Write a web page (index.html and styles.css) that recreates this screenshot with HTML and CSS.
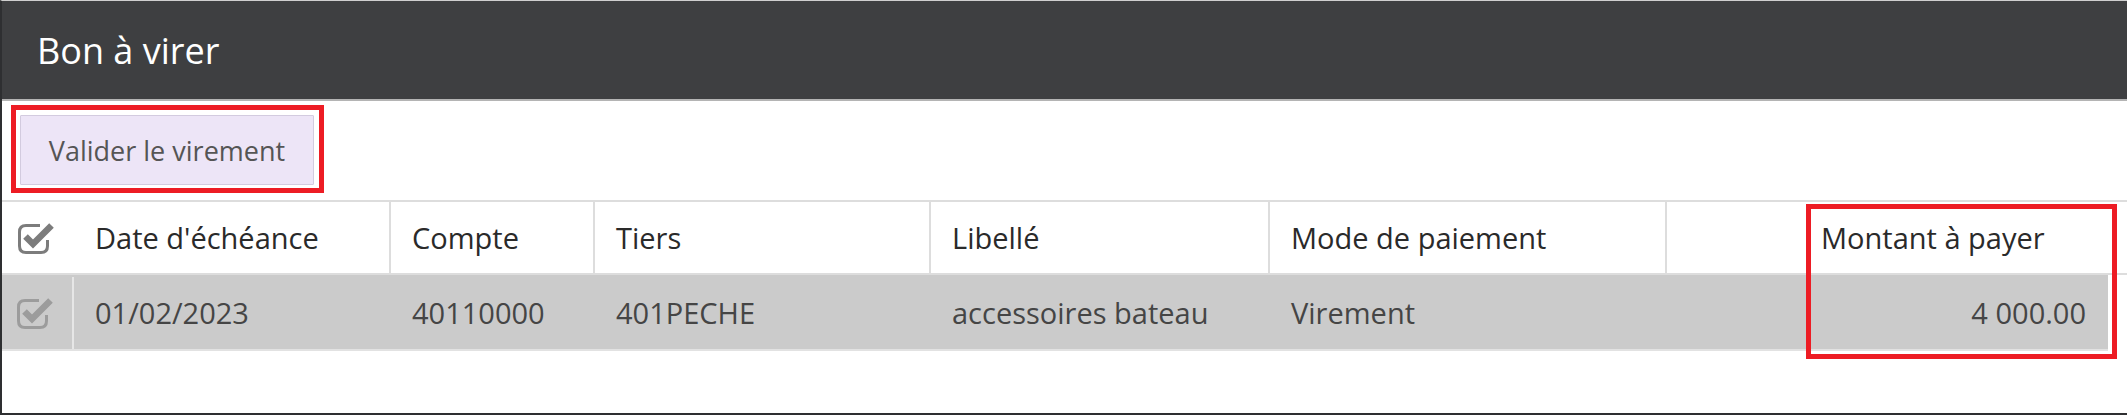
FILE: index.html
```html
<!DOCTYPE html>
<html lang="fr">
<head>
<meta charset="utf-8">
<title>Bon à virer</title>
<link rel="stylesheet" href="styles.css">
</head>
<body>
<div class="panel">
  <header class="panel-header">
    <h1 class="panel-title">Bon à virer</h1>
  </header>
  <div class="toolbar">
    <div class="highlight">
      <button class="btn" type="button">Valider le virement</button>
    </div>
  </div>
  <div class="grid">
    <div class="thead">
      <div class="row row-head">
        <div class="cell cell-check">
          <svg class="chk chk-head" viewBox="0 0 40 32" width="40" height="32" aria-hidden="true">
            <path d="M22 3.5H8Q1.5 3.5 1.5 10V24Q1.5 30.5 8 30.5H23Q29.5 30.5 29.5 24V18" fill="none" stroke="currentColor" stroke-width="3"/>
            <path d="M7.5 14.5L15 22L33.5 3.5" fill="none" stroke="currentColor" stroke-width="6.5"/>
          </svg>
        </div>
        <div class="cell sep">Date d'échéance</div>
        <div class="cell sep">Compte</div>
        <div class="cell sep">Tiers</div>
        <div class="cell sep">Libellé</div>
        <div class="cell sep">Mode de paiement</div>
        <div class="cell"></div>
        <div class="cell">Montant à payer</div>
      </div>
    </div>
    <div class="row row-data">
      <div class="cell cell-check sep-light">
        <svg class="chk chk-data" viewBox="0 0 40 32" width="40" height="32" aria-hidden="true">
          <path d="M22 3.5H8Q1.5 3.5 1.5 10V24Q1.5 30.5 8 30.5H23Q29.5 30.5 29.5 24V18" fill="none" stroke="currentColor" stroke-width="3"/>
          <path d="M7.5 14.5L15 22L33.5 3.5" fill="none" stroke="currentColor" stroke-width="6.5"/>
        </svg>
      </div>
      <div class="cell">01/02/2023</div>
      <div class="cell">40110000</div>
      <div class="cell">401PECHE</div>
      <div class="cell">accessoires bateau</div>
      <div class="cell">Virement</div>
      <div class="cell"></div>
      <div class="cell cell-amount">4 000.00</div>
    </div>
    <div class="col-highlight" aria-hidden="true"></div>
  </div>
</div>
</body>
</html>
```

FILE: styles.css
```css
* { box-sizing: border-box; }

html, body {
  margin: 0;
  padding: 0;
  background: #ffffff;
}

body {
  font-family: "Open Sans", "Noto Sans", sans-serif;
}

.panel {
  width: 2127px;
  height: 415px;
  border-top: 1px solid #cfcfcf;
  border-left: 2px solid #2e2f31;
  border-bottom: 2px solid #2e2f31;
  background: #ffffff;
  display: flex;
  flex-direction: column;
}

.panel-header {
  height: 100px;
  background: #3e3f41;
  border-bottom: 2px solid #b4b4b4;
  display: flex;
  align-items: center;
  padding-left: 35px;
}

.panel-title {
  margin: 0;
  font-weight: 400;
  font-size: 36px;
  line-height: 1;
  color: #ffffff;
  padding-top: 2px;
}

.toolbar {
  height: 99px;
  padding: 4px 0 0 9px;
}

.highlight {
  display: inline-flex;
  border: 5px solid #ed1c24;
  padding: 5px 5px 3px 4px;
}

.btn {
  width: 294px;
  height: 70px;
  background: #ede5f7;
  border: 1px solid #d3cbdf;
  border-radius: 1px;
  font-family: "Open Sans", "Noto Sans", sans-serif;
  font-size: 27px;
  color: #555555;
  padding: 0;
  margin: 0;
}

.grid {
  position: relative;
}

.thead {
  border-top: 2px solid #dddddd;
  border-bottom: 2px solid #dddddd;
}

.row {
  display: grid;
  grid-template-columns: 72px 317px 204px 336px 339px 397px 133px 308px;
  width: 2106px;
  font-size: 29px;
}

.row-head {
  height: 71px;
  color: #2a2a2a;
}

.row-data {
  height: 76px;
  background: #cbcbcb;
  border-bottom: 2px solid #e2e2e2;
  color: #454545;
}

.cell {
  display: flex;
  align-items: center;
  padding: 0 21px;
  white-space: nowrap;
}

.sep {
  border-right: 2px solid #dddddd;
}

.cell-check {
  justify-content: center;
  padding: 0;
}

.sep-light {
  border-right: 2px solid #e6e6e6;
  margin: 2px 0 0 0;
}

.chk { display: block; }
.chk-head { color: #7c7c7c; }
.chk-data { color: #9c9c9c; }

.cell-amount {
  justify-content: flex-end;
  padding-right: 22px;
}

.col-highlight {
  position: absolute;
  left: 1804px;
  top: 4px;
  width: 311px;
  height: 155px;
  border: 5px solid #ed1c24;
  pointer-events: none;
}
```
